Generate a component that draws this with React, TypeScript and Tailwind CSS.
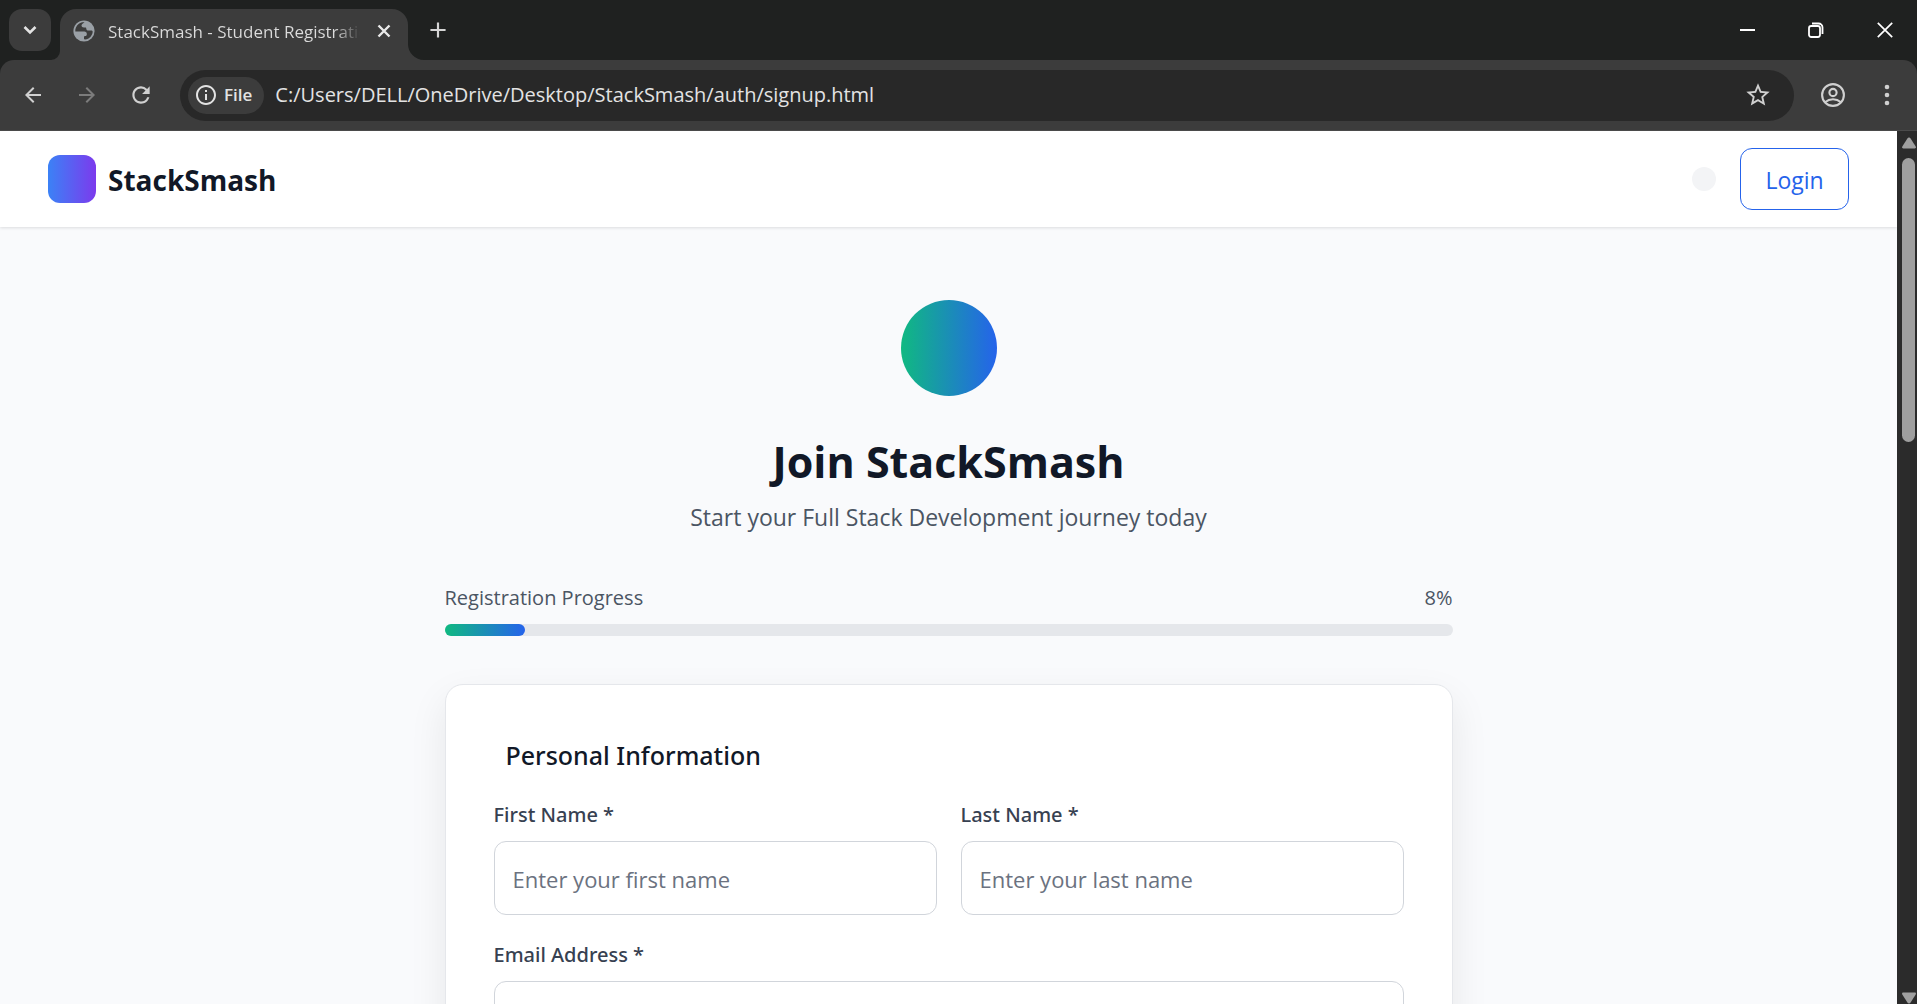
import React from "react";
import { MdArrowBack, MdArrowForward, MdRefresh, MdStarOutline, MdInfoOutline, MdAdd } from "react-icons/md";

function GlobeIcon() {
  return (
    <svg viewBox="0 0 22 22" className="size-[22px] shrink-0" aria-hidden="true">
      <circle cx="11" cy="11" r="10.6" fill="#9aa0a6" />
      <path
        fill="#3c3c3c"
        d="M11.5 2.4c-1.9.9-3 1.900-3 3.200 0 1.300 1 1.900 2.400 1.900h1.300c.8 0 1.100.5 1.100 1.200 0 1.100.8 1.900 2 1.900h2.600c.9 0 1.800.3 1.800 1.200 0 1.600-1.300 5.100-4.200 6.700-1.700.9-3.300 1-4.500.8v-2.200c0-.8.5-1.200 1.300-1.200 1 0 1.500-.6 1.500-1.500v-.6c0-1.400-1-2.300-2.400-2.300H2.300c-.2-2.900.9-5.600 3.300-7.500 1.700-1.300 3.700-1.900 5.900-1.600z"
      />
    </svg>
  );
}

function TabStrip() {
  return (
    <div className="flex h-[60px] items-end bg-[#1f2120]">
      <button aria-label="Search tabs" className="mb-[9px] ml-[9px] grid size-[42px] shrink-0 place-items-center rounded-[13px] bg-[#3c3c3c]">
        <svg viewBox="0 0 14 10" className="h-[10px] w-[14px]" fill="none" stroke="#e3e3e3" strokeWidth="2.600">
          <path d="M1.500 2 7 7.500 12.500 2" />
        </svg>
      </button>
      <svg viewBox="0 0 9 9" className="size-[9px] shrink-0" aria-hidden="true">
        <path d="M9 0A9 9 0 0 1 0 9H9Z" fill="#3c3c3c" />
      </svg>
      <div className="flex h-[51px] w-[348px] items-center rounded-t-[16px] bg-[#3c3c3c] pr-[14px] pb-2 pl-[13px]">
        <GlobeIcon />
        <span className="ml-[13px] w-[252px] overflow-hidden bg-linear-to-r from-[#dcdcdc] from-90% to-transparent bg-clip-text pt-0.5 text-[17px] leading-6 whitespace-nowrap text-transparent">
          StackSmash - Student Registration
        </span>
        <button aria-label="Close tab" className="ml-auto grid size-5 shrink-0 place-items-center">
          <svg viewBox="0 0 14 14" className="size-[14px]" stroke="#e9e9e9" strokeWidth="2.400">
            <path d="M1.500 1.500 12.500 12.500M12.500 1.500 1.500 12.500" />
          </svg>
        </button>
      </div>
      <svg viewBox="0 0 16 16" className="size-4 shrink-0" aria-hidden="true">
        <path d="M0 0A16 16 0 0 0 16 16H0Z" fill="#3c3c3c" />
      </svg>
      <button aria-label="New tab" className="mb-[17px] ml-px grid size-[26px] place-items-center">
        <MdAdd className="size-[26px] text-[#d5d5d5]" />
      </button>
      <div className="ml-auto flex h-[60px] items-center">
        <button aria-label="Minimize" className="grid h-[60px] w-[64px] place-items-center">
          <span className="h-0.5 w-[15px] bg-white" />
        </button>
        <button aria-label="Restore" className="grid h-[60px] w-[74px] place-items-center">
          <svg viewBox="0 0 16 16" className="size-4" fill="none" stroke="#fff" strokeWidth="1.800">
            <rect x="1" y="4" width="11" height="11" rx="2.200" />
            <path d="M4 1.500h6.500a4 4 0 0 1 4 4V12" />
          </svg>
        </button>
        <button aria-label="Close" className="grid h-[60px] w-[64px] place-items-center">
          <svg viewBox="0 0 16 16" className="size-4" stroke="#fff" strokeWidth="1.700">
            <path d="M.8.8 15.200 15.200M15.200.8.8 15.200" />
          </svg>
        </button>
      </div>
    </div>
  );
}

function Toolbar() {
  return (
    <div className="bg-[#1f2120]">
      <div className="flex h-[71px] items-center rounded-t-[14px] border-b border-[#4a4a4a] bg-[#3c3c3c] pr-[18px] pl-[21px]">
        <button aria-label="Back" className="size-6">
          <MdArrowBack className="size-6 text-[#d0d0d0]" />
        </button>
        <button aria-label="Forward" className="ml-[30px] size-6">
          <MdArrowForward className="size-6 text-[#7c7c7c]" />
        </button>
        <button aria-label="Reload" className="ml-[29px] size-[26px]">
          <MdRefresh className="size-[26px] text-[#d0d0d0]" />
        </button>
        <div className="ml-[26px] flex h-[51px] grow items-center rounded-full bg-[#282828] pr-[22px] pl-2">
          <button className="flex h-[37px] items-center gap-[6px] rounded-full bg-[#3c3c3c] pr-3 pl-[6px] text-[17px] font-semibold text-[#e3e3e3]">
            <MdInfoOutline className="size-6" />
            File
          </button>
          <input
            aria-label="Address"
            defaultValue="C:/Users/DELL/OneDrive/Desktop/StackSmash/auth/signup.html"
            className="ml-[11px] grow bg-transparent text-[20px] leading-7 text-[#e3e3e3] outline-none"
          />
          <button aria-label="Bookmark this tab" className="size-7">
            <MdStarOutline className="size-7 text-[#d0d0d0]" />
          </button>
        </div>
        <button aria-label="Profile" className="ml-[27px] size-6">
          <svg viewBox="0 0 24 24" className="size-6" fill="none" stroke="#d0d0d0" strokeWidth="2.100">
            <circle cx="12" cy="12" r="10.900" />
            <circle cx="12" cy="9.500" r="3.600" />
            <path d="M4 19.200c2.400-2 5-3 8-3s5.600 1 8 3" />
          </svg>
        </button>
        <button aria-label="Menu" className="ml-[30px] grid size-6 place-items-center">
          <svg viewBox="0 0 6 24" className="h-6 w-[6px]" fill="#d0d0d0">
            <circle cx="3" cy="4" r="2.300" />
            <circle cx="3" cy="12" r="2.300" />
            <circle cx="3" cy="20" r="2.300" />
          </svg>
        </button>
      </div>
    </div>
  );
}

function Scrollbar() {
  return (
    <div className="flex w-5 shrink-0 flex-col items-center bg-[#2b2b2b] pt-[6px] pl-[3px]" aria-hidden="true">
      <svg viewBox="0 0 14 12" className="h-3 w-[14px] shrink-0" fill="#9f9f9f">
        <path d="M7 0.500c.7 0 1.200.4 1.600 1L13.700 9.500c.5.900.2 2-1 2H1.300c-1.200 0-1.500-1.100-1-2L5.400 1.500c.4-.6.9-1 1.600-1z" />
      </svg>
      <div className="mt-[9px] h-[284px] w-[13px] shrink-0 rounded-full bg-[#9f9f9f]" />
      <svg viewBox="0 0 14 12" className="mt-auto h-3 w-[14px] shrink-0" fill="#9f9f9f">
        <path d="M7 11.500c.7 0 1.200-.4 1.600-1L13.700 2.500c.5-.9.2-2-1-2H1.300c-1.200 0-1.500 1.100-1 2L5.400 10.500c.4.6.9 1 1.600 1z" />
      </svg>
    </div>
  );
}

function Field({ id, label, placeholder, type = "text" }: { id: string; label: string; placeholder: string; type?: string }) {
  return (
    <div className="min-w-0">
      <label htmlFor={id} className="mb-[10px] block font-['Segoe_UI','Noto_Sans','Open_Sans',sans-serif] text-[20px] leading-8 font-medium text-[#374151]">
        {label}
      </label>
      <input
        id={id}
        type={type}
        placeholder={placeholder}
        className="h-[74px] w-full rounded-xl border border-[#d1d5db] bg-white px-[18px] pt-0.5 text-[22px] text-[#111827] placeholder:text-[#6b7280]"
      />
    </div>
  );
}

function SignupPage() {
  return (
    <div className="grow overflow-hidden bg-[#f9fafc]">
      <header className="relative flex h-24 items-center bg-white px-12 shadow-[0_1px_3px_rgba(0,0,0,0.12)]">
        <a href="#" className="flex items-center gap-3">
          <span className="size-12 rounded-xl bg-[linear-gradient(90deg,#3b82f6,#7c3aed)]" />
          <span className="pt-0.5 text-[28px] leading-9 font-bold text-[#111827]">StackSmash</span>
        </a>
        <div className="ml-auto flex items-center gap-6">
          <button aria-label="Toggle theme" className="size-6 rounded-full bg-[#f3f4f6]" />
          <a href="#" className="min-w-[109px] rounded-xl border border-[#2563eb] px-6 pt-[13px] pb-[11px] text-center text-[23px] leading-9 text-[#2563eb]">
            Login
          </a>
        </div>
      </header>
      <main className="mx-auto max-w-[1008px] pt-[73px]">
        <div className="text-center">
          <div className="mx-auto size-24 rounded-full bg-[linear-gradient(90deg,#10b981,#2563eb)]" />
          <h1 className="mt-9 text-[43px] leading-[60px] font-bold text-[#111827]">Join StackSmash</h1>
          <p className="mt-[7px] text-[23px] leading-9 text-[#4b5563]">Start your Full Stack Development journey today</p>
        </div>
        <div className="mt-[47px]">
          <div className="mb-[10px] flex justify-between text-[20px] leading-8 text-[#4b5563]">
            <span>Registration Progress</span>
            <span>8%</span>
          </div>
          <div className="h-3 rounded-full bg-[#e5e7eb]">
            <div className="h-3 w-[8%] rounded-full bg-[linear-gradient(90deg,#10b981,#2563eb)]" />
          </div>
        </div>
        <form className="mt-12 rounded-[18px] border border-[#e5e7eb] bg-white p-12 shadow-[0_15px_38px_rgba(0,0,0,0.08)]">
          <h2 className="mb-[22px] pl-3 font-['Segoe_UI','Noto_Sans','Open_Sans',sans-serif] text-[25px] leading-[44px] font-medium text-[#111827]">
            Personal Information
          </h2>
          <div className="grid grid-cols-2 gap-6">
            <Field id="first" label="First Name *" placeholder="Enter your first name" />
            <Field id="last" label="Last Name *" placeholder="Enter your last name" />
            <div className="col-span-2">
              <Field id="email" type="email" label="Email Address *" placeholder="" />
            </div>
          </div>
        </form>
      </main>
    </div>
  );
}

export default function App() {
  return (
    <div className="flex h-screen flex-col overflow-hidden font-['Segoe_UI','Open_Sans','Noto_Sans',sans-serif]">
      <TabStrip />
      <Toolbar />
      <div className="flex min-h-0 grow">
        <SignupPage />
        <Scrollbar />
      </div>
    </div>
  );
}
